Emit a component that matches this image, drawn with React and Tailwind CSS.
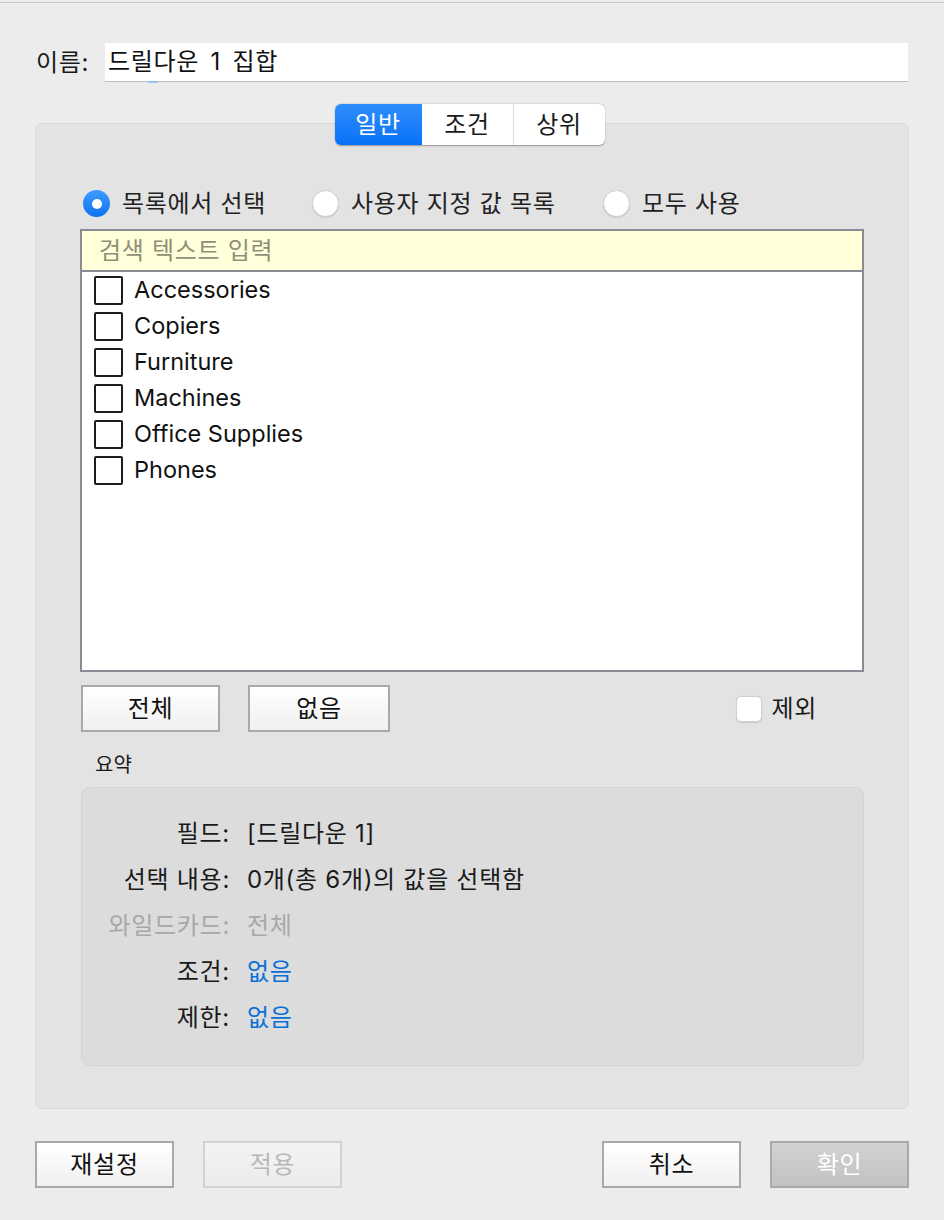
import React from "react";

const items = ["Accessories", "Copiers", "Furniture", "Machines", "Office Supplies", "Phones"];

const ko = "text-[24px] tracking-[0.7px]";

function Radio({ checked, label }) {
  return (
    <div className="flex items-center gap-[12px]">
      {checked ? (
        <div className="w-[27px] h-[27px] rounded-full bg-gradient-to-b from-[#3d9bff] to-[#0a72f0] flex items-center justify-center">
          <div className="w-[10px] h-[10px] rounded-full bg-white" />
        </div>
      ) : (
        <div className="w-[27px] h-[27px] rounded-full bg-white border border-[#cfcfcf] shadow-[0_1px_1px_rgba(0,0,0,0.12)]" />
      )}
      <span className={`${ko} text-[#222]`}>{label}</span>
    </div>
  );
}

function Btn({ children, className = "", variant = "normal" }) {
  const v =
    variant === "disabled"
      ? "border-[#d2d2d2] text-[#b8b8b8] bg-gradient-to-b from-[#f3f3f3] to-[#ececec]"
      : variant === "default"
      ? "border-[#a9a9a9] text-white bg-gradient-to-b from-[#d2d2d2] to-[#c2c2c2]"
      : "border-[#a9a9a9] text-[#111] bg-gradient-to-b from-[#ffffff] to-[#f0f0f0]";
  return (
    <div className={`h-[47px] w-[139px] border-2 flex items-center justify-center ${ko} ${v} ${className}`}>
      {children}
    </div>
  );
}

function SumRow({ label, value, labelClass = "text-[#1a1a1a]", valueClass = "text-[#1a1a1a]" }) {
  return (
    <div className="flex items-center h-[46px]">
      <div className={`w-[148px] text-right ${ko} ${labelClass}`}>{label}</div>
      <div className={`pl-[17px] ${ko} ${valueClass}`}>{value}</div>
    </div>
  );
}

export default function App() {
  return (
    <div className="w-[944px] h-[1220px] bg-[#ececec] font-['Inter','Noto_Sans_CJK_KR',sans-serif] flex flex-col overflow-hidden">
      <div className="h-[2px] bg-[#ececec]" />
      <div className="h-px bg-[#c6c6c6]" />
      {/* Name row */}
      <div className="flex items-center pt-[40px] pl-[36px] pr-[36px]">
        <span className={`${ko} text-[#1a1a1a] w-[69px]`}>이름:</span>
        <div className="relative flex-1 h-[39px] bg-white border-b border-[#bdbdbd] flex items-center pl-[3px]">
          <span className={`${ko} text-[#111] [word-spacing:4px]`}>드릴다운 1 집합</span>
          <div className="absolute left-[43px] bottom-[-2px] w-[10px] h-[2px] bg-[#9ec3f0]" />
        </div>
      </div>

      {/* Tabs */}
      <div className="relative z-10 flex justify-center mt-[22px] mb-[-22px] pr-[5px]">
        <div className="flex h-[41px] rounded-[6px] bg-white shadow-[0_0.5px_1.5px_rgba(0,0,0,0.35)] overflow-hidden">
          <div className={`w-[87px] flex items-center justify-center ${ko} text-white bg-gradient-to-b from-[#2e8dfd] to-[#0672f7]`}>일반</div>
          <div className={`w-[92px] flex items-center justify-center ${ko} text-[#1a1a1a] border-r border-[#dcdcdc]`}>조건</div>
          <div className={`w-[91px] flex items-center justify-center ${ko} text-[#1a1a1a]`}>상위</div>
        </div>
      </div>

      {/* Panel */}
      <div className="mx-[35px] w-[874px] h-[986px] bg-[#e3e3e3] border border-[#d9d9d9] rounded-[7px] flex flex-col">
        <div className="flex items-center pl-[47px] pt-[66px] h-[93px]">
          <div className="w-[229px]"><Radio checked label="목록에서 선택" /></div>
          <div className="w-[291px]"><Radio label="사용자 지정 값 목록" /></div>
          <Radio label="모두 사용" />
        </div>
        <div className="mt-[12px] ml-[44px] w-[784px] h-[443px] border-2 border-[#898c92] bg-white flex flex-col">
          <div className="h-[41px] bg-[#ffffd9] border-b-2 border-[#898c92] flex items-center pl-[17px]">
            <span className={`${ko} text-[#8f8f78]`}>검색 텍스트 입력</span>
          </div>
          <div className="flex flex-col">
            {items.map((it) => (
              <div key={it} className="h-[36px] flex items-center pl-[12px]">
                <div className="w-[29px] h-[29px] border-2 border-[#1c1c1c] rounded-[2px] bg-white" />
                <span className="ml-[11px] text-[23.5px] text-[#111] font-['Inter',sans-serif]">{it}</span>
              </div>
            ))}
          </div>
        </div>
        <div className="flex items-center mt-[13px] ml-[45px] w-[783px]">
          <Btn>전체</Btn>
          <Btn className="ml-[28px] w-[142px]">없음</Btn>
          <div className="ml-auto mr-[47px] flex items-center gap-[9px]">
            <div className="w-[26px] h-[26px] rounded-[5px] bg-white border border-[#d0d0d0] shadow-[0_0.5px_1px_rgba(0,0,0,0.12)]" />
            <span className={`${ko} text-[#1a1a1a]`}>제외</span>
          </div>
        </div>
        <div className="ml-[59px] mt-[19px] h-[28px] flex items-center text-[20px] text-[#1a1a1a]">요약</div>
        <div className="mt-[8px] ml-[45px] w-[783px] h-[279px] bg-[#dcdcdc] border border-[#d3d3d3] rounded-[9px] flex flex-col pt-[23px]">
          <SumRow label="필드:" value="[드릴다운 1]" />
          <SumRow label="선택 내용:" value="0개(총 6개)의 값을 선택함" />
          <SumRow label="와일드카드:" value="전체" labelClass="text-[#a8a8a8]" valueClass="text-[#a8a8a8]" />
          <SumRow label="조건:" value="없음" valueClass="text-[#0b6fd8]" />
          <SumRow label="제한:" value="없음" valueClass="text-[#0b6fd8]" />
        </div>
      </div>

      {/* Bottom buttons */}
      <div className="flex items-center mt-[32px] px-[35px]">
        <Btn>재설정</Btn>
        <Btn variant="disabled" className="ml-[29px]">적용</Btn>
        <Btn className="ml-auto">취소</Btn>
        <Btn variant="default" className="ml-[29px]">확인</Btn>
      </div>
    </div>
  );
}
